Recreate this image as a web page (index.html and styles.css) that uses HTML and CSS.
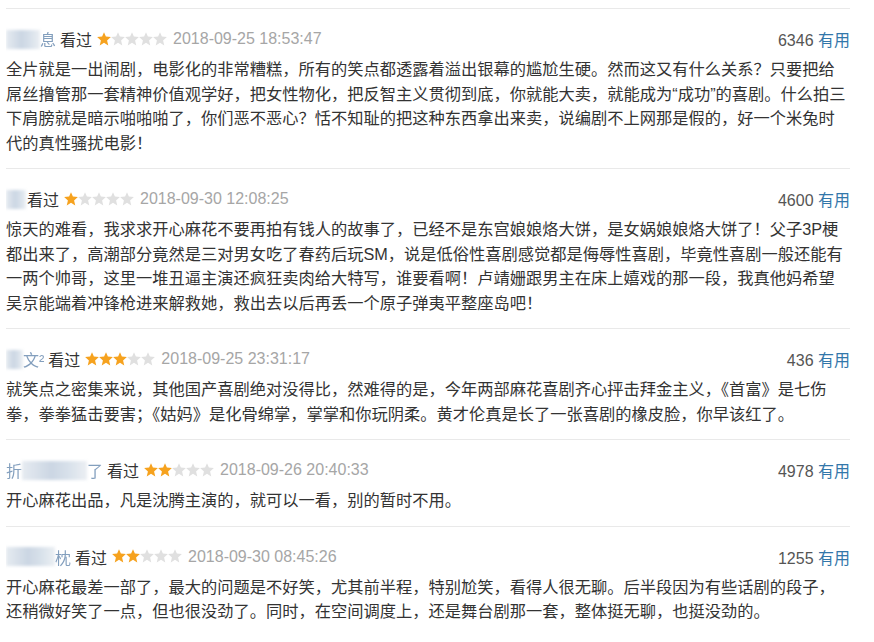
FILE: index.html
```html
<!DOCTYPE html>
<html>
<head>
    <title>短评</title>
    <link rel="stylesheet" href="styles.css">
</head>
<body>
    <svg class="defs" width="0" height="0">
        <defs>
            <symbol id="star" viewBox="0 0 20 20">
                <polygon points="10,0.3 12.7,6.6 19.8,7.2 14.4,12 16.1,19.2 10,15.4 3.9,19.2 5.6,12 0.2,7.2 7.3,6.6"/>
            </symbol>
        </defs>
    </svg>

    <div class="comments">
        <div class="comment">
            <div class="comment-info">
                <span class="meta">
                    <span class="name"><span class="blur w34"></span><span class="frag">息</span></span>
                    <span class="watched">看过</span>
                    <span class="stars">
                        <svg class="on"><use href="#star"/></svg><svg><use href="#star"/></svg><svg><use href="#star"/></svg><svg><use href="#star"/></svg><svg><use href="#star"/></svg>
                    </span>
                    <span class="time">2018-09-25 18:53:47</span>
                </span>
                <span class="votes"><span class="count">6346</span> <a href="#">有用</a></span>
            </div>
            <p class="short">全片就是一出闹剧，电影化的非常糟糕，所有的笑点都透露着溢出银幕的尴尬生硬。然而这又有什么关系？只要把给屌丝撸管那一套精神价值观学好，把女性物化，把反智主义贯彻到底，你就能大卖，就能成为“成功”的喜剧。什么拍三下肩膀就是暗示啪啪啪了，你们恶不恶心？恬不知耻的把这种东西拿出来卖，说编剧不上网那是假的，好一个米兔时代的真性骚扰电影！</p>
        </div>

        <div class="comment">
            <div class="comment-info">
                <span class="meta">
                    <span class="name"><span class="blur w20"></span></span>
                    <span class="watched tight">看过</span>
                    <span class="stars">
                        <svg class="on"><use href="#star"/></svg><svg><use href="#star"/></svg><svg><use href="#star"/></svg><svg><use href="#star"/></svg><svg><use href="#star"/></svg>
                    </span>
                    <span class="time">2018-09-30 12:08:25</span>
                </span>
                <span class="votes"><span class="count">4600</span> <a href="#">有用</a></span>
            </div>
            <p class="short">惊天的难看，我求求开心麻花不要再拍有钱人的故事了，已经不是东宫娘娘烙大饼，是女娲娘娘烙大饼了！父子3P梗都出来了，高潮部分竟然是三对男女吃了春药后玩SM，说是低俗性喜剧感觉都是侮辱性喜剧，毕竟性喜剧一般还能有一两个帅哥，这里一堆丑逼主演还疯狂卖肉给大特写，谁要看啊！卢靖姗跟男主在床上嬉戏的那一段，我真他妈希望吴京能端着冲锋枪进来解救她，救出去以后再丢一个原子弹夷平整座岛吧！</p>
        </div>

        <div class="comment">
            <div class="comment-info">
                <span class="meta">
                    <span class="name"><span class="blur w17"></span><span class="frag">文²</span></span>
                    <span class="watched">看过</span>
                    <span class="stars">
                        <svg class="on"><use href="#star"/></svg><svg class="on"><use href="#star"/></svg><svg class="on"><use href="#star"/></svg><svg><use href="#star"/></svg><svg><use href="#star"/></svg>
                    </span>
                    <span class="time">2018-09-25 23:31:17</span>
                </span>
                <span class="votes"><span class="count">436</span> <a href="#">有用</a></span>
            </div>
            <p class="short">就笑点之密集来说，其他国产喜剧绝对没得比，然难得的是，今年两部麻花喜剧齐心抨击拜金主义，《首富》是七伤拳，拳拳猛击要害；《姑妈》是化骨绵掌，掌掌和你玩阴柔。黄才伦真是长了一张喜剧的橡皮脸，你早该红了。</p>
        </div>

        <div class="comment">
            <div class="comment-info">
                <span class="meta">
                    <span class="name"><span class="frag">折</span><span class="blur w65"></span><span class="frag">了</span></span>
                    <span class="watched">看过</span>
                    <span class="stars">
                        <svg class="on"><use href="#star"/></svg><svg class="on"><use href="#star"/></svg><svg><use href="#star"/></svg><svg><use href="#star"/></svg><svg><use href="#star"/></svg>
                    </span>
                    <span class="time">2018-09-26 20:40:33</span>
                </span>
                <span class="votes"><span class="count">4978</span> <a href="#">有用</a></span>
            </div>
            <p class="short">开心麻花出品，凡是沈腾主演的，就可以一看，别的暂时不用。</p>
        </div>

        <div class="comment">
            <div class="comment-info">
                <span class="meta">
                    <span class="name"><span class="blur w49"></span><span class="frag">枕</span></span>
                    <span class="watched">看过</span>
                    <span class="stars">
                        <svg class="on"><use href="#star"/></svg><svg class="on"><use href="#star"/></svg><svg><use href="#star"/></svg><svg><use href="#star"/></svg><svg><use href="#star"/></svg>
                    </span>
                    <span class="time">2018-09-30 08:45:26</span>
                </span>
                <span class="votes"><span class="count">1255</span> <a href="#">有用</a></span>
            </div>
            <p class="short">开心麻花最差一部了，最大的问题是不好笑，尤其前半程，特别尬笑，看得人很无聊。后半段因为有些话剧的段子，还稍微好笑了一点，但也很没劲了。同时，在空间调度上，还是舞台剧那一套，整体挺无聊，也挺没劲的。</p>
        </div>
    </div>
</body>
</html>
```

FILE: styles.css
```css
body {
    margin: 8px 0 0 6px;
    background: #fff;
    font-family: "Liberation Sans", "Noto Sans CJK SC", sans-serif;
    color: #333;
}
.defs {
    position: absolute;
}
.comments {
    width: 844px;
}
.comment {
    border-top: 1px solid #e9e9e9;
    padding: 18px 0 13px;
}
.comment-info {
    display: flex;
    justify-content: space-between;
    align-items: center;
    height: 24px;
    margin-bottom: 6px;
    font-size: 16px;
}
.meta {
    display: flex;
    align-items: center;
}
.name {
    display: flex;
    align-items: center;
    color: #5a7fa8;
}
.blur {
    display: inline-block;
    height: 19px;
    background: linear-gradient(90deg, #e6ebf1, #cbd6e3 45%, #d7e0ea 70%, #ebeff3);
    filter: blur(1.8px);
}
.w17 { width: 17px; }
.w20 { width: 20px; }
.w34 { width: 34px; }
.w49 { width: 49px; }
.w65 { width: 65px; }
.frag {
    opacity: 0.75;
    filter: blur(0.4px);
}
.watched {
    margin-left: 4px;
    color: #333;
}
.watched.tight {
    margin-left: 1px;
}
.stars {
    display: flex;
    margin: -1px 6px 0 5px;
}
.stars svg {
    width: 14px;
    height: 14px;
    fill: #e0e0e0;
}
.stars svg.on {
    fill: #f6a21e;
}
.time {
    color: #a6a6a6;
}
.votes {
    color: #555;
}
.votes a {
    color: #3377aa;
    text-decoration: none;
}
.short {
    margin: 0;
    font-size: 16.25px;
    line-height: 24.5px;
    color: #333;
}
```
